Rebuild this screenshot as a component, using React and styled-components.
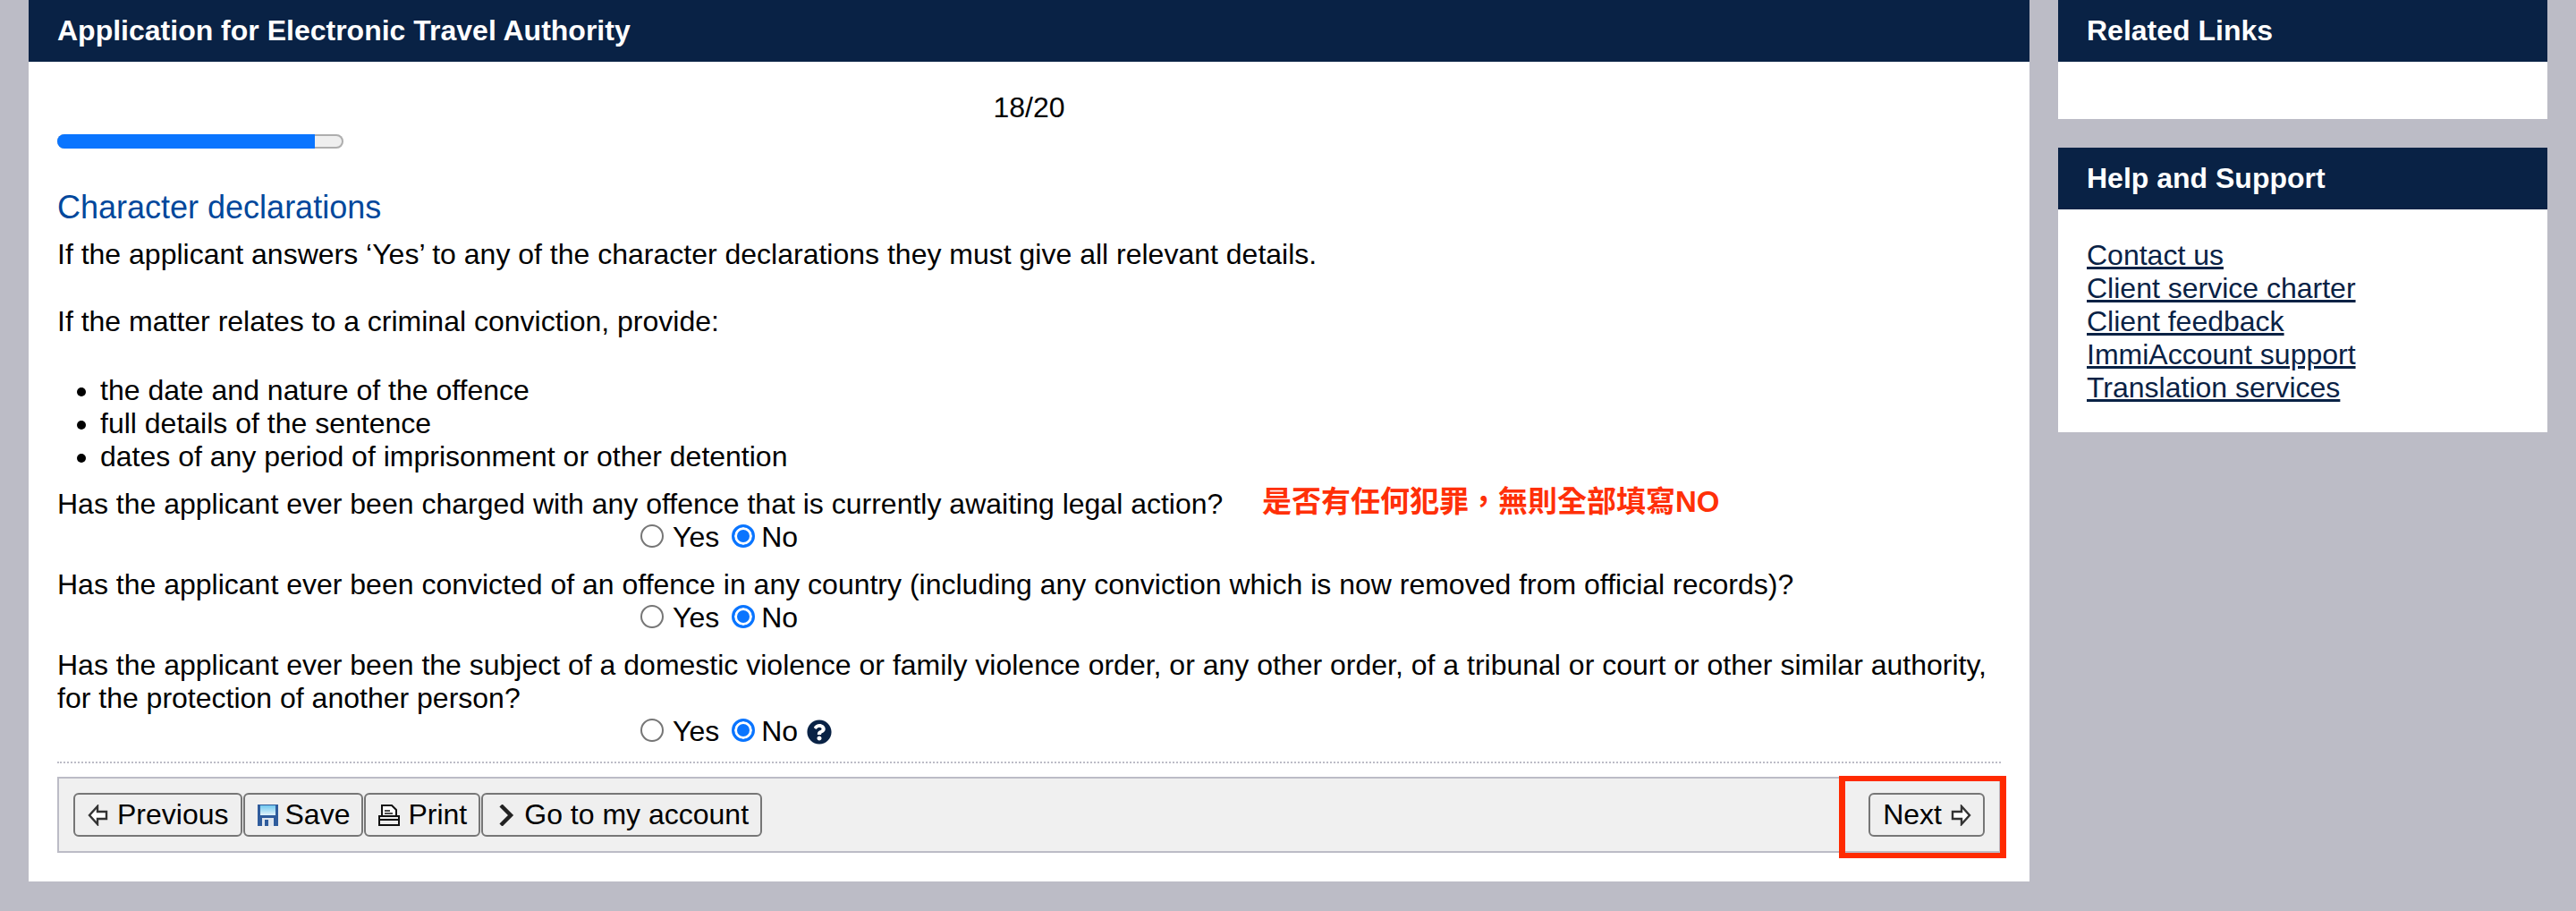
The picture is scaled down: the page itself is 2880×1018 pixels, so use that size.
import styled, { createGlobalStyle } from "styled-components";
import { FaQuestionCircle } from "react-icons/fa";

const GlobalStyle = createGlobalStyle`
  html, body {
    margin: 0;
    padding: 0;
    background-color: #bcbcc6;
  }

  body {
    font-family: "Liberation Sans", Arial, sans-serif;
    font-size: 32px;
    line-height: 37px;
    color: #000;
  }
`;

const Page = styled.div`
  display: flex;
  align-items: flex-start;
  gap: 32px;
  padding: 0 32px 31px;
`;

const Main = styled.main`
  width: 2237px;
  flex: none;
  background-color: #fff;
`;

const PanelHeader = styled.h2`
  margin: 0;
  height: 69px;
  padding-left: 32px;
  background-color: #092245;
  color: #fff;
  font-size: 32px;
  font-weight: 700;
  line-height: 69px;
`;

const Content = styled.div`
  padding: 33px 32px 32px;
`;

const Step = styled.div`
  text-align: center;
`;

const ProgressTrack = styled.div`
  width: 320px;
  height: 16px;
  margin-top: 11px;
  border-radius: 8px;
  background-color: #efefef;
  box-shadow: inset 0 0 0 2px #aeaeae;
  overflow: hidden;
`;

const ProgressFill = styled.div`
  height: 100%;
  background-color: #0a75ff;
`;

const Heading = styled.h3`
  margin: 44px 0 0;
  color: #00489c;
  font-size: 36px;
  font-weight: 400;
  line-height: 44px;
`;

const Paragraph = styled.p`
  margin: 0 0 ${(props) => props.$bottom}px;
  padding-top: ${(props) => props.$top || 0}px;
`;

const BulletList = styled.ul`
  margin: 0;
  padding-left: 48px;
`;

const Question = styled.div`
  position: relative;
  margin-top: 16px;
`;

const Note = styled.span`
  position: absolute;
  left: 1347px;
  top: -3px;
  color: #ff3008;
  font-family: "Liberation Sans", "Noto Sans CJK TC", sans-serif;
  font-size: 33px;
  font-weight: 700;
`;

const RadioRow = styled.div`
  display: flex;
  align-items: center;
  height: 37px;
  padding-left: 652px;
`;

const RadioLabel = styled.label`
  display: flex;
  align-items: center;
  gap: ${(props) => props.$gap}px;
  margin-right: 14px;
`;

const Radio = styled.input`
  appearance: none;
  width: 26px;
  height: 26px;
  margin: -4px 0 0;
  box-sizing: border-box;
  border: 2px solid #767676;
  border-radius: 50%;
  background-color: #fff;

  &:checked {
    border: 3px solid #0a75ff;
    background-color: #0a75ff;
    box-shadow: inset 0 0 0 3px #fff;
  }
`;

const HelpIcon = styled(FaQuestionCircle)`
  width: 28px;
  height: 28px;
  margin-left: -4px;
  color: #092245;
`;

const Divider = styled.div`
  margin-top: 15px;
  border-top: 2px dotted #bcbcc6;
`;

const Toolbar = styled.div`
  position: relative;
  display: flex;
  justify-content: space-between;
  margin-top: 15px;
  padding: 16px;
  background-color: #f0f0f0;
  border: 2px solid #bcbcc6;
`;

const ButtonGroup = styled.div`
  display: flex;
  gap: 1px;
`;

const Button = styled.button`
  display: flex;
  align-items: center;
  gap: ${(props) => props.$gap}px;
  height: 49px;
  padding: 0 13px 0 14px;
  border: 2px solid #767676;
  border-radius: 6px;
  background-color: #efefef;
  color: #000;
  font: inherit;
`;

const Highlight = styled.div`
  position: absolute;
  top: -3px;
  right: -8px;
  width: 187px;
  height: 92px;
  box-sizing: border-box;
  border: solid #ff2a00;
  border-width: 6px 7px;
  pointer-events: none;
`;

const Aside = styled.aside`
  width: 547px;
  flex: none;
  display: flex;
  flex-direction: column;
  gap: 32px;
`;

const AsideCard = styled.section`
  background-color: #fff;
`;

const EmptyBody = styled.div`
  height: 64px;
`;

const LinkList = styled.div`
  display: flex;
  flex-direction: column;
  align-items: flex-start;
  padding: 33px 32px 31px;
`;

const HelpLink = styled.a`
  color: #092245;
  text-decoration: underline;
`;

const ArrowIcon = ({ flip }) => (
  <svg
    width="23"
    height="24"
    viewBox="0 0 23 24"
    style={flip ? { transform: "scaleX(-1)" } : undefined}
  >
    <path
      d="M11 2 2 12l9 10v-6h10V8H11z"
      fill="#fff"
      stroke="#333"
      strokeWidth="2.4"
      strokeLinejoin="miter"
    />
  </svg>
);

const SaveIcon = () => (
  <svg width="23" height="24" viewBox="0 0 23 24">
    <defs>
      <linearGradient id="floppy" x1="0" y1="0" x2="0" y2="1">
        <stop offset="0" stopColor="#6fc8f0" />
        <stop offset="1" stopColor="#e4f3fa" />
      </linearGradient>
    </defs>
    <rect width="23" height="24" fill="#2f5c9c" />
    <rect x="3" y="1" width="17" height="11" fill="url(#floppy)" />
    <rect x="5" y="15" width="13" height="9" fill="#dfe6ee" />
    <rect x="8" y="17" width="4" height="7" fill="#2f5c9c" />
  </svg>
);

const PrintIcon = () => (
  <svg width="24" height="24" viewBox="0 0 24 24" fill="none" stroke="#111" strokeWidth="2">
    <path d="M4 13V1h11l5 5v7" fill="#fff" />
    <path d="M7 7h6M7 10h9" strokeWidth="1.6" />
    <path d="M1 13h22v10H1z" fill="#eee" />
    <path d="M1 17h22" />
  </svg>
);

const ChevronIcon = () => (
  <svg width="21" height="24" viewBox="0 0 21 24" fill="none">
    <path d="M6 1l11 11L6 23" stroke="#222" strokeWidth="4.4" />
  </svg>
);

const helpLinks = [
  "Contact us",
  "Client service charter",
  "Client feedback",
  "ImmiAccount support",
  "Translation services",
];

const questions = [
  {
    text: "Has the applicant ever been charged with any offence that is currently awaiting legal action?",
    note: "是否有任何犯罪\uFF0C無則全部填寫NO",
  },
  {
    text: "Has the applicant ever been convicted of an offence in any country (including any conviction which is now removed from official records)?",
  },
  {
    text: "Has the applicant ever been the subject of a domestic violence or family violence order, or any other order, of a tribunal or court or other similar authority, for the protection of another person?",
    help: true,
  },
];

function App() {
  const step = 18;
  const total = 20;

  return (
    <>
      <GlobalStyle />
      <Page>
        <Main>
          <PanelHeader>Application for Electronic Travel Authority</PanelHeader>
          <Content>
            <Step>
              {step}/{total}
            </Step>
            <ProgressTrack>
              <ProgressFill style={{ width: `${(step / total) * 100}%` }} />
            </ProgressTrack>
            <Heading>Character declarations</Heading>
            <Paragraph $top={12} $bottom={38}>
              If the applicant answers ‘Yes’ to any of the character declarations they must give all
              relevant details.
            </Paragraph>
            <Paragraph $bottom={40}>If the matter relates to a criminal conviction, provide:</Paragraph>
            <BulletList>
              <li>the date and nature of the offence</li>
              <li>full details of the sentence</li>
              <li>dates of any period of imprisonment or other detention</li>
            </BulletList>
            {questions.map((question, index) => (
              <Question key={index}>
                {question.text}
                {question.note && <Note>{question.note}</Note>}
                <RadioRow>
                  <RadioLabel $gap={10}>
                    <Radio type="radio" name={`q${index}`} value="yes" />
                    Yes
                  </RadioLabel>
                  <RadioLabel $gap={7}>
                    <Radio type="radio" name={`q${index}`} value="no" defaultChecked />
                    No
                  </RadioLabel>
                  {question.help && <HelpIcon />}
                </RadioRow>
              </Question>
            ))}
            <Divider />
            <Toolbar>
              <ButtonGroup>
                <Button $gap={10}>
                  <ArrowIcon />
                  Previous
                </Button>
                <Button $gap={8}>
                  <SaveIcon />
                  Save
                </Button>
                <Button $gap={9}>
                  <PrintIcon />
                  Print
                </Button>
                <Button $gap={11}>
                  <ChevronIcon />
                  Go to my account
                </Button>
              </ButtonGroup>
              <Button $gap={10}>
                Next
                <ArrowIcon flip />
              </Button>
              <Highlight />
            </Toolbar>
          </Content>
        </Main>
        <Aside>
          <AsideCard>
            <PanelHeader>Related Links</PanelHeader>
            <EmptyBody />
          </AsideCard>
          <AsideCard>
            <PanelHeader>Help and Support</PanelHeader>
            <LinkList>
              {helpLinks.map((link) => (
                <HelpLink key={link} href="#">
                  {link}
                </HelpLink>
              ))}
            </LinkList>
          </AsideCard>
        </Aside>
      </Page>
    </>
  );
}

export default App;
